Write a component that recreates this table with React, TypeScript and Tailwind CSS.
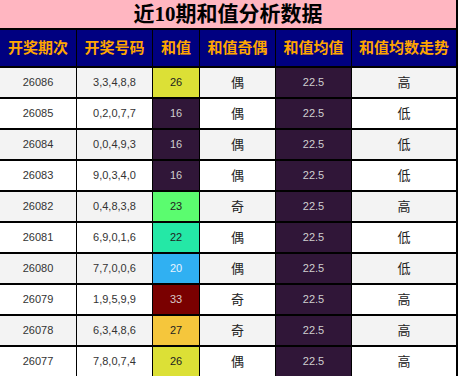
const rows = [
  { id: '26086', nums: '3,3,4,8,8', sum: 26, parity: '偶', trend: '高' },
  { id: '26085', nums: '0,2,0,7,7', sum: 16, parity: '偶', trend: '低' },
  { id: '26084', nums: '0,0,4,9,3', sum: 16, parity: '偶', trend: '低' },
  { id: '26083', nums: '9,0,3,4,0', sum: 16, parity: '偶', trend: '低' },
  { id: '26082', nums: '0,4,8,3,8', sum: 23, parity: '奇', trend: '高' },
  { id: '26081', nums: '6,9,0,1,6', sum: 22, parity: '偶', trend: '低' },
  { id: '26080', nums: '7,7,0,0,6', sum: 20, parity: '偶', trend: '低' },
  { id: '26079', nums: '1,9,5,9,9', sum: 33, parity: '奇', trend: '高' },
  { id: '26078', nums: '6,3,4,8,6', sum: 27, parity: '奇', trend: '高' },
  { id: '26077', nums: '7,8,0,7,4', sum: 26, parity: '偶', trend: '高' },
]

// colour of the 和值 cell
const sumStyle: Record<number, string> = {
  16: 'bg-[#301638] text-[#cfcfcf]',
  20: 'bg-[#30b0f2] text-[#e8f4ff]',
  22: 'bg-[#24e8a6] text-[#222]',
  23: 'bg-[#5bfc6f] text-[#222]',
  26: 'bg-[#dce036] text-[#222]',
  27: 'bg-[#f5c63c] text-[#222]',
  33: 'bg-[#7a0000] text-[#d8c8c8]',
}

const cols = 'grid grid-cols-[77px_76px_47px_76px_76px_106px]'
const headers = ['开奖期次', '开奖号码', '和值', '和值奇偶', '和值均值', '和值均数走势']

export default function App() {
  return (
    <div className="w-[458px] h-[377px] overflow-hidden bg-white" style={{ fontFamily: '"Liberation Sans", "Noto Sans CJK SC", sans-serif' }}>
      <div className="h-[30px] bg-[#ffb6c1] border-b-2 border-black border-r-2 flex items-center justify-center">
        <h1 className="text-[21px] font-bold text-black leading-none" style={{ fontFamily: '"Liberation Serif", "Noto Sans CJK SC", serif' }}>
          近10期和值分析数据
        </h1>
      </div>
      <div className={`${cols} h-[36px] bg-[#000080]`}>
        {headers.map((h, i) => (
          <div
            key={h}
            className={`flex items-center justify-center text-[15px] font-bold text-[#ffa500] border-black ${i === 5 ? 'border-r-2' : 'border-r'}`}
          >
            {h}
          </div>
        ))}
      </div>
      {rows.map((r, idx) => (
        <div key={r.id} className={`${cols} h-[31px] border-t-2 border-black ${idx % 2 === 0 ? 'bg-[#f3f3f3]' : 'bg-white'} text-[11px] text-[#333]`}>
          <div className="flex items-center justify-center border-r border-black">{r.id}</div>
          <div className="flex items-center justify-center border-r border-black">{r.nums}</div>
          <div className={`flex items-center justify-center border-r border-black ${sumStyle[r.sum]}`}>{r.sum}</div>
          <div className="flex items-center justify-center border-r border-black text-[13px] text-[#222]">{r.parity}</div>
          <div className="flex items-center justify-center border-r border-black bg-[#301638] text-[#cfcfcf]">22.5</div>
          <div className="flex items-center justify-center border-r-2 border-black text-[13px] text-[#222]">{r.trend}</div>
        </div>
      ))}
    </div>
  )
}
